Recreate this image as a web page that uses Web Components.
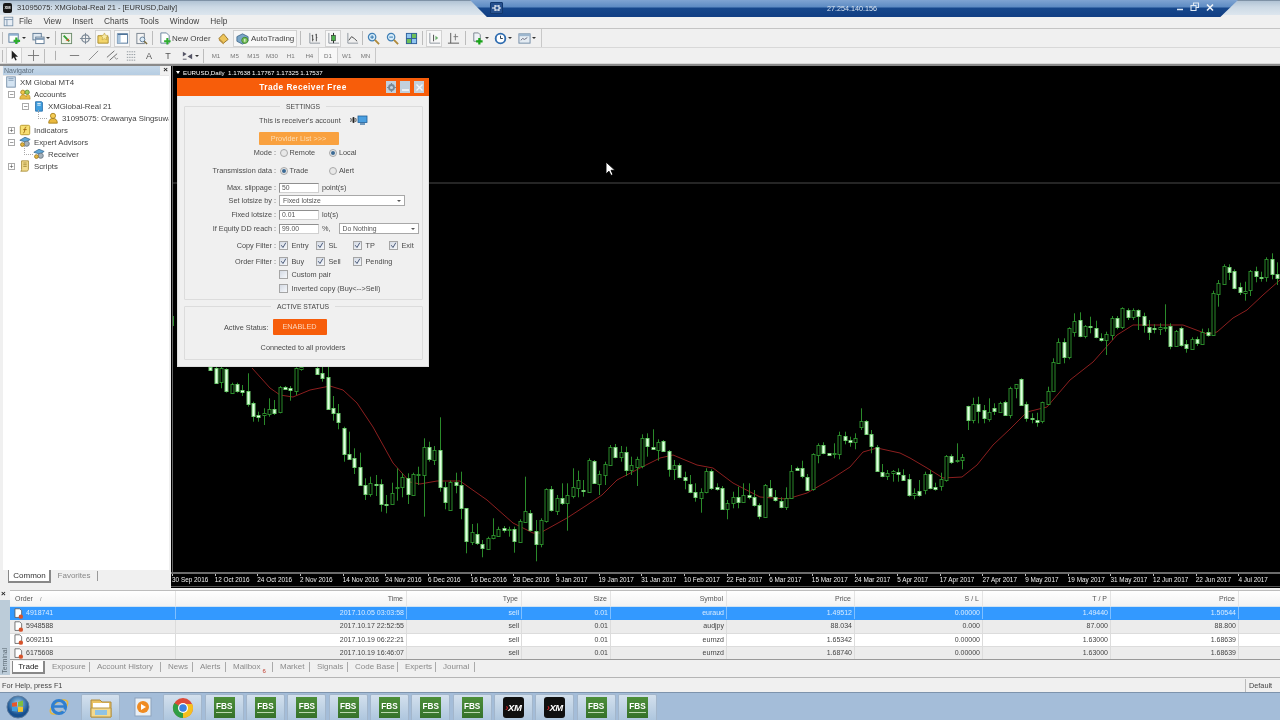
<!DOCTYPE html>
<html><head><meta charset="utf-8"><title>MT4</title>
<style>html,body{margin:0;padding:0;background:#f0f0f0;overflow:hidden}</style></head>
<body>
<mt-app></mt-app>
<script>
const def=(name,css,render)=>customElements.define(name,class extends HTMLElement{
  constructor(){super();this.attachShadow({mode:'open'})}
  connectedCallback(){this.shadowRoot.innerHTML=`<style>${css}</style>${render(this)}`}
});
const F='"Liberation Sans",sans-serif';
const I={
new:'<rect x="1" y="2" width="10" height="9" fill="#fff" stroke="#56789a"/><rect x="1" y="2" width="10" height="2" fill="#8fb0d0"/><path d="M9 6v7M6 9.500h7" stroke="#2fae2f" stroke-width="2.400"/>',
prof:'<rect x="1" y="1.500" width="9" height="7" fill="#dfe8f0" stroke="#5f7a94"/><rect x="4" y="5.500" width="9" height="7" fill="#fff" stroke="#5f7a94"/><path d="M4 7.500h9" stroke="#7f9ab4" stroke-width="2"/>',
mw:'<rect x="1.500" y="1.500" width="11" height="11" fill="#eef3e8" stroke="#6b8a6b"/><path d="M4 4l6 6" stroke="#2f9e2f" stroke-width="2"/><path d="M10 7l-1 3-3-1z" fill="#d8582a"/>',
data:'<circle cx="7" cy="7" r="4" fill="none" stroke="#7a8794" stroke-width="1.300"/><path d="M7 1v12M1 7h12" stroke="#7a8794"/>',
nav:'<path d="M1 4h5l1 1h5v7H1z" fill="#f3d56a" stroke="#a98a2a"/><path d="M8 1l1.200 2.500 2.800.3-2 1.900.5 2.800L8 7.200 5.500 8.500l.5-2.800-2-1.900 2.800-.3z" fill="#f8e9a0" stroke="#b89a3a" stroke-width=".6"/>',
term:'<rect x="1.500" y="2" width="11" height="10" fill="#fff" stroke="#4f7398"/><rect x="1.500" y="2" width="3.500" height="10" fill="#a9c4dd"/><path d="M2 2.500h10" stroke="#4f7398" stroke-width="1.500"/>',
test:'<rect x="2" y="1.500" width="8" height="11" fill="#f4f4f4" stroke="#78838e"/><circle cx="8" cy="8" r="2.600" fill="#dcecf8" stroke="#5f7a94"/><path d="M10 10l3 3" stroke="#7a6a3a" stroke-width="1.500"/>',
order:'<path d="M2 1h6l3 3v8H2z" fill="#fff" stroke="#68829c"/><path d="M9 6.500v7M5.500 10h7" stroke="#2fae2f" stroke-width="2.200"/>',
ed:'<path d="M2 7l5-5 5 6-5 4z" fill="#eec55a" stroke="#96742a"/><path d="M2 7l5 5v1.500L2 9z" fill="#b78a34"/>',
auto:'<path d="M1 5l6-3 6 3v5l-6 3-6-3z" fill="#7aa5c8" stroke="#4a7092"/><circle cx="9.500" cy="9" r="3.300" fill="#7cc05c" stroke="#3f8a2f"/><path d="M9.500 7.500v3" stroke="#fff"/>',
bar:'<path d="M2 1v11h11" fill="none" stroke="#8a939c"/><path d="M5 3v7M4 4h1M5 8h1M9 2v8M8 3h1M9 6h1" stroke="#444" fill="none"/>',
cndl:'<path d="M2 1v11h11" fill="none" stroke="#8a939c"/><path d="M7 1v11" stroke="#222"/><rect x="5" y="3.500" width="4" height="6" fill="#4bb24b" stroke="#222" stroke-width=".6"/>',
line:'<path d="M2 1v11h11" fill="none" stroke="#8a939c"/><path d="M3 9l3-4 3 2 3 3" fill="none" stroke="#444"/>',
zin:'<circle cx="5.500" cy="5.500" r="4" fill="#d6ecfa" stroke="#3f7fb5" stroke-width="1.300"/><path d="M3.500 5.500h4M5.500 3.500v4" stroke="#2a6ea8"/><path d="M8.500 8.500l4.500 4.500" stroke="#b08a3a" stroke-width="2"/>',
zout:'<circle cx="5.500" cy="5.500" r="4" fill="#d6ecfa" stroke="#3f7fb5" stroke-width="1.300"/><path d="M3.500 5.500h4" stroke="#2a6ea8"/><path d="M8.500 8.500l4.500 4.500" stroke="#b08a3a" stroke-width="2"/>',
tile:'<rect x="1" y="1" width="12" height="12" fill="#2f5f9a"/><rect x="2" y="2" width="4.500" height="4.500" fill="#8fc4f0"/><rect x="7.500" y="2" width="4.500" height="4.500" fill="#6ec05a"/><rect x="2" y="7.500" width="4.500" height="4.500" fill="#6ec05a"/><rect x="7.500" y="7.500" width="4.500" height="4.500" fill="#8fc4f0"/>',
scr:'<path d="M2 1v11h11" fill="none" stroke="#8a939c"/><path d="M6 3v7" stroke="#444"/><path d="M8 4l3 2.500L8 9z" fill="#6ab06a"/>',
shf:'<path d="M4 1v11M1 12h12" fill="none" stroke="#555"/><path d="M9 2v7M7 5h5" stroke="#777"/>',
ind:'<path d="M3 1h5l2 2v7H3z" fill="#eef2f6" stroke="#78838e"/><path d="M9 6.500v7M5.500 10h7" stroke="#19a319" stroke-width="2.400"/>',
clk:'<circle cx="7" cy="7" r="5.200" fill="#fff" stroke="#2e6cb0" stroke-width="2"/><path d="M7 4v3h2.500" fill="none" stroke="#234"/>',
tpl:'<rect x="1" y="2" width="12" height="10" fill="#e4ecf3" stroke="#708aa4"/><rect x="1" y="2" width="12" height="2.500" fill="#9cb6ce"/><path d="M3 9l2-2 2 1 3-2" fill="none" stroke="#667"/>',
arr:'<path d="M4 1.500v9.500l2.300-2 1.600 3.500 1.500-.7-1.600-3.400h3z" fill="#222"/>',
cross:'<path d="M7 1v12M1 7h12" stroke="#777"/>',
vl:'<path d="M7 2v10" stroke="#aaa"/>',hl:'<path d="M2 7h10" stroke="#777"/>',
tl:'<path d="M2 12L12 2" stroke="#888"/>',
chan:'<path d="M1 9l8-7M4 12l8-7" stroke="#666"/><path d="M9 8l2 3 2-1" fill="none" stroke="#999"/>',
fib:'<path d="M2 3h10M2 6h10M2 9h10M2 12h10" stroke="#8d949b" stroke-dasharray="1.500 1"/>',
shp:'<path d="M2 3l4 2.500-4 2.500zM7 8l5-3v6z" fill="#556"/><path d="M2 11h4" stroke="#556"/>',
mb:'<rect x="1.500" y="1.500" width="11" height="11" fill="#e8eef5" stroke="#6f8aa4"/><path d="M1.500 4.500h11M5 4.500v8" stroke="#6f8aa4"/>',
sv:'<rect x="2" y="1" width="10" height="12" fill="#d4e4f2" stroke="#6f8aa4"/><path d="M4 3h6M4 5h6" stroke="#7f9ab4"/>',
acc:'<circle cx="4.500" cy="5" r="2.500" fill="#f2c84a" stroke="#a57e1a"/><circle cx="9.500" cy="5" r="2.500" fill="#9fce5a" stroke="#5f8a2a"/><path d="M1 13c0-4 2-5 4-5s3 1 3.500 2.500c0-2 1-3 1.500-3 2 0 3 1.500 3 5.500z" fill="#e9bb45" stroke="#a57e1a" stroke-width=".6"/>',
srv:'<path d="M3 2h7l1 1v10H3z" fill="#3f9fe0" stroke="#2a6ea8"/><path d="M5 4h4M5 6h4" stroke="#fff"/>',
usr:'<circle cx="7" cy="4.500" r="3" fill="#f5cc55" stroke="#a57e1a"/><path d="M2 13c0-4 2-5.500 5-5.500s5 1.500 5 5.500z" fill="#eab93e" stroke="#a57e1a"/>',
indi:'<rect x="1.500" y="1.500" width="11" height="11" rx="1.500" fill="#f7df73" stroke="#b4921f"/><path d="M8.500 3.500C7 3.500 7 5 6.700 7S6.300 10.500 5 10.500M5 6.500h4" fill="none" stroke="#a06a10" stroke-width="1.100"/>',
ea:'<path d="M1 5l6-3.500L13 4l-5 3z" fill="#5fa8d8" stroke="#3f7298"/><circle cx="9" cy="9" r="3" fill="#a4b0ba" stroke="#6a7680"/><circle cx="4" cy="10" r="2.200" fill="#e4b640" stroke="#9a7a20"/>',
scp:'<path d="M3 1h8v10c0 1-1 2-2 2H2c1 0 1-1 1-2z" fill="#f2dc8e" stroke="#a58a35"/><path d="M5 3.500h4M5 5.500h4M5 7.500h4" stroke="#a58a35"/>',
doc:'<path d="M2.500 1h6l2.500 2.500V12H2.500z" fill="#fff" stroke="#555"/><circle cx="10" cy="11" r="2.800" fill="#d6522a"/>'
};
def('ui-icon',':host{display:inline-flex;flex:none}svg{display:block}',t=>{const s=+(t.getAttribute('size')||13);return `<svg width="${s}" height="${s}" viewBox="0 0 14 14">${I[t.getAttribute('name')]||''}</svg>`});

def('mt-title',`:host{display:flex;align-items:center;height:15px;margin-bottom:-1px;background:linear-gradient(#64788e 0,#b4c5d6 1.500px,#ccd9e5 7px,#dde6ee 100%);font:7.500px ${F};color:#333;position:relative;z-index:2}
.x{width:9px;height:10px;margin:0 5px 0 3px;background:#161616;border-radius:2px;color:#fff;font:bold 4px/10px ${F};text-align:center;flex:none}
.rdp{position:absolute;left:470px;top:0;width:768px;height:17px;clip-path:polygon(0 0,100% 0,97.700% 100%,2.200% 100%);background:linear-gradient(#7fa4d2 0,#5d8bc3 7px,#17488c 8px,#123f84 16px);color:#dbe6f2;font:7.200px ${F}}
.ip{position:absolute;left:357px;top:4px}
.pin{position:absolute;left:20px;top:2px;width:13px;height:12px;background:#26508e;border:1px solid #12386e;box-sizing:border-box;border-radius:1px}
.ctl{position:absolute;top:2px;right:23px;display:flex;gap:5px;align-items:center}
svg{display:block}`,()=>`<span class="x">XM</span><span><slot></slot></span>
<div class="rdp"><div class="pin"><svg width="11" height="10" viewBox="0 0 11 10"><path d="M1 5h3M4 2v6M4 3h4M4 7h4M8 2v6M8 5h2" stroke="#fff" fill="none"/></svg></div><span class="ip">27.254.140.156</span>
<div class="ctl"><svg width="10" height="11" viewBox="0 0 10 11"><path d="M2 7.500h6" stroke="#dfe9f4" stroke-width="1.500"/></svg><svg width="10" height="11" viewBox="0 0 10 11"><path d="M3.500 3V1h5v4.500H6.500M1 3.500h5v5H1z" stroke="#dfe9f4" fill="none" stroke-width="1.100"/></svg><svg width="10" height="11" viewBox="0 0 10 11"><path d="M2 2.500l6 6M8 2.500l-6 6" stroke="#eef3f9" stroke-width="1.600"/></svg></div></div>`);

def('mt-menu',`:host{display:flex;align-items:center;height:14px;background:#f0f0f0;border-bottom:1px solid #c4c4c4;font:8.300px ${F};color:#444;padding-left:3px}
span{margin-right:11px}ui-icon{margin-right:5px}`,t=>`<ui-icon name="mb" size="11"></ui-icon>`+t.getAttribute('items').split(',').map(s=>`<span>${s}</span>`).join(''));

def('mt-toolbar',`:host{display:block;background:#f0f0f0;border-bottom:1px solid #d8d8d8;font:8px ${F};color:#444}
.r{display:flex;align-items:center;height:var(--h,17px);width:max-content;border-right:1px solid #c8c8c8}
.i{display:flex;width:14px;height:15px;align-items:center;justify-content:center;flex:none}
.h{background:#f8f8f8;outline:1px solid #d2d2d2}
.c{width:6px;flex:none;display:flex;justify-content:center}.c:before{content:"";border:2px solid transparent;border-top:2.500px solid #333;border-bottom:0}
.p{flex:none;display:flex;justify-content:center;height:14px}.p:before{content:"";width:1px;background:#bcbcbc}
.g{width:7px;flex:none;height:12px;background:linear-gradient(90deg,transparent 2px,#bbb 2px,#bbb 3px,transparent 3px)}
.f{flex:none;width:18.700px;text-align:center;color:#777;font-size:6.200px;height:15px;line-height:15px}
.l{flex:none;white-space:nowrap;width:40px}.b{display:flex;align-items:center;flex:none;height:15px;box-sizing:border-box;background:#f7f7f7;outline:1px solid #d2d2d2;width:62px;padding-left:2px;gap:2px}
.z{flex:none;width:14px;text-align:center;color:#555;font-size:9px}`,t=>'<div class="r">'+t.getAttribute('spec').split(' ').map(x=>{const [k,v,w]=x.split(':');
 if(k=='i')return `<div class="i"><ui-icon name="${v}" size="13"></ui-icon></div>`;
 if(k=='h')return `<div class="i h"><ui-icon name="${v}" size="13"></ui-icon></div>`;
 if(k=='c')return '<div class="c"></div>';
 if(k=='s')return `<div style="width:${v}px;flex:none"></div>`;
 if(k=='p')return `<div class="p" style="width:${v}px"></div>`;
 if(k=='g')return '<div class="g"></div>';
 if(k=='f')return `<div class="f${w?' h':''}">${v}</div>`;
 if(k=='o')return `<div class="l">New Order</div>`;
 if(k=='a')return `<div class="b"><ui-icon name="auto" size="13"></ui-icon><span>AutoTrading</span></div>`;
 if(k=='z')return `<div class="z">${v}</div>`;
 return ''}).join('')+'</div>');

def('tree-item',`:host{display:flex;align-items:center;height:12px;white-space:nowrap;position:relative;padding-left:calc(var(--l)*1px)}
ui-icon{margin-right:3px}
.e{position:absolute;width:7px;height:7px;box-sizing:border-box;border:1px solid #aaa;background:#fff;top:2.500px;font:7px/5px ${F};color:#444;text-align:center}
.d{position:absolute;border-left:1px dotted #aaa;border-bottom:1px dotted #aaa;width:8px;height:8px;top:-2px}`,t=>{const l=+t.getAttribute('l'),e=t.getAttribute('e');
 return `<style>:host{--l:${l}}</style>`+(e?`<span class="e" style="left:${l-11}px">${e}</span>`:`${t.hasAttribute('dot')?`<span class="d" style="left:${l-9}px"></span>`:''}`)+`<ui-icon name="${t.getAttribute('i')}" size="12"></ui-icon><slot></slot>`});

def('nav-panel',`:host{display:flex;flex-direction:column;width:171px;flex:none;background:#f0f0f0;font:7.800px ${F};color:#444}
.h{height:9px;display:flex;align-items:center;justify-content:space-between;margin:0 3px 0 3px;color:#5d6d7c;font-size:7px;position:relative}
.h b{position:absolute;left:0;top:0;right:8px;height:9px;background:linear-gradient(#c6d8e9,#b6cde2)}
.h span{position:relative;padding-left:1px}.h i{font:bold 8px ${F};color:#222;position:absolute;right:0;top:-1px}
.t{flex:1;background:#fff;margin:0 2px 0 3px;overflow:hidden;position:relative;border-top:1px solid #e6e6e6}
.b{height:18px;display:flex;align-items:flex-start;padding-left:8px;color:#888;font-size:8px}
.tab{height:13px;line-height:11px;box-sizing:border-box}
.a{width:43px;background:#fff;border:1px solid #888;border-top:0;color:#333;text-align:center;box-shadow:inset -1px -1px 0 #888}
.n{width:47px;height:10px;margin-top:1px;line-height:10px;text-align:center;border-right:1px solid #999;color:#888}`,()=>`<div class="h"><b></b><span>Navigator</span><i>×</i></div>
<div class="t"><slot></slot></div><div class="b"><div class="tab a">Common</div><div class="tab n">Favorites</div></div>`);

def('mt-chart',`:host{display:block;flex:1;position:relative;background:#000;overflow:hidden;min-width:0}
svg{display:block}
.hd{position:absolute;left:5px;top:3px;color:#fff;font:6.200px ${F};white-space:nowrap;display:flex;align-items:center;gap:2px}
.hd i{border:2px solid transparent;border-top:3px solid #fff;border-bottom:0;margin:0 1px 0 0;display:block}
.ax{display:flex;height:15px;box-sizing:border-box;border-top:2px solid #6c6c6c;border-bottom:1px solid #555;color:#eee;font:6.400px/10px ${F};padding-left:1px;overflow:hidden}
.ax span{flex:none;width:42.670px;white-space:nowrap;position:relative;padding-top:1px;box-sizing:border-box}
.ax span:before{content:"";position:absolute;left:0;top:0;height:2px;width:1px;background:#bbb}
.wrap{position:relative}
.dlg{position:absolute;left:6px;top:12px}
.cur{position:absolute;left:434px;top:95px}`,t=>{
 const seg=[
 [170+121/3,360,`20 30 20 30 F;24 68 20 70 F;25 68 20 85 H;28 95 25 98 F;72 98 68 102 H;72 92 68 98 F;90 95 75 108 F;92 130 40 140 F;128 167 125 185 F;165 170 155 185 F;160 165 145 195 H;147 163 115 170 H;147 158 120 165 F;82 158 78 160 H;80 87 78 90 F;85 90 78 122 F;25 95 22 105 H;20 26 20 32 H;-;-;25 42 20 45 F;40 55 20 65 F;50 145 20 148 F;145 160 108 182 F;160 188 132 208 F;205 282 200 305 F;282 298 215 300 F;295 322 265 342 F;322 375 278 378 F;375 402 355 420 F;370 402 350 410 H;372 374 345 408 F;372 432 358 455 F;432 434 405 460 F;400 432 368 435 H;382 385 325 422 H;352 382 340 412 H;355 403 340 432 F;342 405 338 408 H;343 345 320 375 H;260 343 235 470 H;262 298 245 305 F;270 300 258 315 H;270 380 172 395 F;380 425 365 448 F;367 450 362 452 H;367 375 338 400 F;375 445 335 478 F;445 545 445 580 F;515 545 492 555 H;522 550 490 555 F;553 565 540 592 F;535 568 530 570 H;525 535 475 538 H;508 528 500 530 H;503 510 498 518 F;508 510 500 530 H;508 543 500 578 F;482 545 478 548 H;452 485 350 487 H;460 510 450 515 F;512 550 480 604 F`],
 [540+2/3,400,`360 432 355 442 H;268 365 265 368 H;268 330 258 335 F;294 332 285 345 H;295 310 250 315 F;286 310 250 392 H;262 288 205 295 H;240 263 212 292 H;270 272 240 290 F;180 275 175 278 H;182 248 180 252 F;222 252 212 285 H;192 224 185 255 H;140 195 135 198 H;140 170 132 175 F;155 170 138 185 H;155 210 140 228 F;195 210 170 225 H;177 200 170 258 H;115 200 103 205 H;115 138 100 170 F;140 147 88 150 F;125 148 118 182 H;122 153 120 155 F;153 207 150 230 F;195 207 180 240 H;195 230 190 235 F;230 240 215 268 F;252 275 225 280 F;277 293 250 305 F;275 293 265 338 H;212 275 205 280 H;214 266 208 270 F;262 268 250 272 F;263 325 258 328 F;308 325 300 358 H;290 307 275 325 H;290 305 260 325 F;284 305 250 308 H;286 292 250 298 F;292 316 270 320 F;316 348 310 358 F;254 350 252 352 H;265 288 240 292 F;292 300 270 305 F;302 320 292 325 F;294 320 262 330 H;212 292 195 295 H;205 210 200 212 F;205 230 182 235 F;230 268 222 270 F;163 268 160 272 H;135 165 130 190 H;135 160 127 163 F;160 165 160 167 F;160 163 130 175 H;105 163 95 178 H;108 120 95 133 F;120 126 110 140 F;115 128 100 148 H;62 80 25 90 H;62 102 60 105 F;103 140 90 160 F;140 213 135 215 F;216 228 192 232 F;218 226 210 240 H;213 218 210 245 H;215 220 205 245 F;224 238 208 240 F;238 285 222 290 F;278 283 265 298 H;272 285 240 290 F`],
 [910+44/3,360,`342 390 335 403 H;342 385 330 388 F;380 385 368 392 F;358 380 338 392 H;288 360 285 365 H;288 305 283 312 F;300 304 250 308 H;292 302 282 328 H`],
 [900+203/3,230,`527 570 527 600 F;523 570 503 580 H;522 542 500 580 F;540 565 525 580 F;545 567 505 575 H;535 545 520 555 F;518 545 515 548 H;517 556 512 558 F;475 557 470 565 H;463 475 463 505 H;447 525 445 528 F;523 565 515 575 F;565 568 550 580 F;570 575 548 590 F;517 575 515 580 H;482 522 470 525 H;397 485 385 485 H;335 397 325 400 H;335 380 325 400 F;295 382 292 388 H;272 305 250 320 H;270 317 247 322 F;287 317 285 325 H;288 292 260 310 F;293 320 272 325 F;325 331 310 335 F;313 331 305 375 H;265 315 258 330 H;265 292 258 298 F;235 293 232 297 H;240 260 235 270 F;240 260 235 270 H;240 257 238 300 F;257 285 248 308 F;290 304 270 330 F;294 298 283 310 F;292 298 280 315 H;290 293 223 305 H;287 347 280 358 F;304 348 300 350 H;295 345 290 350 F;343 355 330 368 F;326 355 322 360 H;327 340 320 348 F;306 342 296 345 H;307 315 295 320 F;190 317 182 318 H;158 190 150 230 H;107 160 103 162 H;110 124 103 150 F;122 172 118 178 F;172 187 158 195 F;182 187 155 212 H;122 180 120 198 H;124 140 110 157 F;140 143 125 155 F;87 142 82 155 H;87 132 70 148 F;132 143 97 165 F`]];
 let w='',b='';
 for(const [x0,y0,s] of seg){s.split(';').forEach((c,i)=>{if(c=='-')return;const [tp,bt,hi,lo,k]=c.split(' ');
  const x=Math.round(x0+i*16/3)+.5,Y=v=>y0+v/3;
  w+=`M${x} ${Y(+hi).toFixed(1)}V${Y(+lo).toFixed(1)}`;
  const ty=Math.round(Y(+tp))+.5,h=Math.max(1,Math.round(Y(+bt)-Y(+tp)));
  b+=`<rect x="${x-1.5}" y="${ty}" width="3" height="${h}" fill="${k=='F'?'#e2ffe2':'#000'}" stroke="${k=='F'?'#6fd06f':'#2a8a2a'}"/>`;
 })}
 const ma='252,368 270,388 280,395 293,397 310,390 330,386 343,390 357,403 373,427 393,463 410,482 420,484 437,481 460,481 487,500 513,523 533,533 540,533 567,518 587,505 602,495 617,480 640,468 660,458 673,455 697,465 713,468 733,483 760,497 787,499 807,493 833,478 850,467 863,452 877,448 900,453 910,458 927,468 943,478 962,477 977,465 993,445 1010,429 1027,412 1047,407 1070,380 1093,362 1117,335 1133,325 1167,325 1183,325 1207,334 1217,332 1233,318 1247,310 1263,295 1280,280';
 const labs='30 Sep 2016,12 Oct 2016,24 Oct 2016,2 Nov 2016,14 Nov 2016,24 Nov 2016,6 Dec 2016,16 Dec 2016,28 Dec 2016,9 Jan 2017,19 Jan 2017,31 Jan 2017,10 Feb 2017,22 Feb 2017,6 Mar 2017,15 Mar 2017,24 Mar 2017,5 Apr 2017,17 Apr 2017,27 Apr 2017,9 May 2017,19 May 2017,31 May 2017,12 Jun 2017,22 Jun 2017,4 Jul 2017'.split(',');
 return `<div class="wrap"><svg width="1109" height="506" viewBox="171 66 1109 506">
 <path d="M172.500 66V572" stroke="#666"/>
 <path d="M173 183H1280" stroke="#4a4a4a"/>
 <path d="M173.500 316V326" stroke="#2a8a2a"/>
 <polyline points="${ma}" fill="none" stroke="#8c1f1f" stroke-width="1"/>
 <path d="${w}" stroke="#2a8a2a" fill="none"/>${b}</svg>
 <div class="hd"><i></i><span>EURUSD,Daily&nbsp; 1.17638 1.17767 1.17325 1.17537</span></div>
 <div class="dlg"><receiver-dialog></receiver-dialog></div>
 <svg class="cur" width="11" height="16" viewBox="0 0 11 16"><path d="M1 1v12l3-2.800 2 4.300 2-1-2-4.200h4z" fill="#fff" stroke="#000" stroke-width=".9"/></svg></div>
 <div class="ax">${labs.map(l=>`<span>${l}</span>`).join('')}</div>`});

def('ds-group',`:host{display:block;margin:0 5.500px}
fieldset{margin:0;padding:var(--p,2.500px 0 4.500px);border:1px solid #dcdcdc;border-radius:1px;height:var(--fh);box-sizing:border-box;min-width:0}
legend{margin:0 auto;padding:0 6px;font:6.800px/9px ${F};color:#444}`,t=>`<fieldset><legend>${t.getAttribute('legend')}</legend><slot></slot></fieldset>`);

def('form-row',`:host{display:grid;grid-template-columns:91.500px 1fr;column-gap:3px;align-items:center;height:13px;font:7.300px ${F};color:#4a4a4a;margin-top:var(--m,0)}
.l{text-align:right;white-space:nowrap}.c{display:flex;align-items:center;white-space:nowrap;min-width:0}`,t=>`<div class="l">${t.getAttribute('label')||''}</div><div class="c"><slot></slot></div>`);

def('ds-check',`:host{display:inline-flex;align-items:center;gap:3.500px;width:var(--w,37px);flex:none}
.b{width:9px;height:9px;box-sizing:border-box;border:1px solid #a5a5a5;background:linear-gradient(135deg,#d4dae4,#f6f8fb);flex:none;display:block}
svg{display:block}`,t=>`<span class="b">${t.hasAttribute('on')?'<svg width="7" height="7" viewBox="0 0 7 7"><path d="M1.200 3.200l1.800 2.300 2.800-4.800" stroke="#4a5a7a" fill="none"/></svg>':''}</span><slot></slot>`);

def('ds-radio',`:host{display:inline-flex;align-items:center;gap:2px;width:49px;flex:none;margin-left:.5px}
.r{width:8px;height:8px;box-sizing:border-box;border-radius:50%;border:1px solid #a9a9a9;background:#e8e8e8;display:flex;align-items:center;justify-content:center}
.r i{width:4px;height:4px;border-radius:50%;background:#3b6a94;display:block}`,t=>`<span class="r">${t.hasAttribute('on')?'<i></i>':''}</span><slot></slot>`);

def('ds-input',`:host{display:inline-block;width:40px;height:10px;box-sizing:border-box;border:1px solid #8f8f8f;border-right-color:#d0d0d0;border-bottom-color:#d0d0d0;background:#fff;font:6.800px/8px ${F};padding-left:2px;color:#555;flex:none;margin-right:3px}`,()=>`<slot></slot>`);

def('ds-select',`:host{display:inline-flex;align-items:center;justify-content:space-between;height:11px;box-sizing:border-box;border:1px solid #a8a8a8;background:#fff;font:6.800px ${F};color:#555;padding:0 3px;flex:none}
i{border:2px solid transparent;border-top:2.500px solid #555;border-bottom:0;display:block}`,()=>`<slot></slot><i></i>`);

def('receiver-dialog',`:host{display:flex;flex-direction:column;width:252px;height:289px;background:#f0f0f0;box-sizing:border-box;border:1px solid #dedede;border-top:0}
.hd{height:18px;background:#f75d0a;display:flex;align-items:center;position:relative;flex:none;margin:0 -1px}
.hd b{flex:1;text-align:center;color:#fff;font:bold 8.300px ${F};letter-spacing:.45px}
.btns{position:absolute;right:5px;top:3px;display:flex;gap:4px}
.btns span{width:10px;height:12px;background:#c2d0dc;display:flex;align-items:center;justify-content:center}
svg{display:block}
.p{height:14px;display:flex;align-items:center;font:7.300px ${F};color:#4a4a4a;white-space:nowrap;margin-left:74.500px}
.pb{width:80px;height:13px;background:#f9a13f;color:#fcdcb4;font:7.300px/13px ${F};text-align:center;margin:5px 0 1px 74px;border-radius:1px}
.s{height:16px;display:flex;align-items:center;margin-top:8px;font:7.300px ${F};color:#4a4a4a}
.sl{width:84px;text-align:right;margin-right:4px}
.en{width:54px;height:16px;background:#f75d0a;color:#fbd6bd;font:7.300px/16px ${F};text-align:center;border-radius:1px}
.cn{text-align:center;font:7.300px ${F};color:#4a4a4a;margin-top:8px}
.g1{margin-top:5.500px}.g2{margin-top:2.500px}`,()=>`<div class="hd"><b>Trade Receiver Free</b><div class="btns">
<span><svg width="9" height="9" viewBox="0 0 9 9"><circle cx="4.500" cy="4.500" r="2.500" fill="none" stroke="#7a8894" stroke-width="1.800"/><path d="M4.500 0v2M4.500 7v2M0 4.500h2M7 4.500h2" stroke="#7a8894" stroke-width="1.200"/></svg></span>
<span><svg width="9" height="9" viewBox="0 0 9 9"><path d="M1 7h7" stroke="#f5f7f9" stroke-width="1.600"/></svg></span>
<span><svg width="9" height="9" viewBox="0 0 9 9"><path d="M1.500 1.500l6 6M7.500 1.500l-6 6" stroke="#f5f7f9" stroke-width="1.400"/></svg></span></div></div>
<ds-group class="g1" legend="SETTINGS" style="--fh:198px">
<div class="p">This is receiver's account<svg style="margin-left:8px" width="19" height="10" viewBox="0 0 19 10"><path d="M1.500 3c1 1.200 1 2.800 0 4M.5 2" fill="none" stroke="#222" stroke-width=".8"/><rect x="3.500" y="2" width="2" height="6" rx="1" fill="#222"/><path d="M6.500 3c.8 1.200.8 2.800 0 4" fill="none" stroke="#222" stroke-width=".8"/><rect x="9" y="1" width="9" height="6.500" fill="#4a9fe0" stroke="#1f5f98" stroke-width=".8"/><path d="M11 9h5" stroke="#1f5f98" stroke-width="1.200"/></svg></div>
<div class="pb">Provider List &gt;&gt;&gt;</div>
<form-row label="Mode :"><ds-radio>Remote</ds-radio><ds-radio on>Local</ds-radio></form-row>
<form-row label="Transmission data :" style="--m:5px"><ds-radio on>Trade</ds-radio><ds-radio>Alert</ds-radio></form-row>
<form-row label="Max. slippage :" style="--m:4px"><ds-input>50</ds-input>point(s)</form-row>
<form-row label="Set lotsize by :"><ds-select style="width:126px">Fixed lotsize</ds-select></form-row>
<form-row label="Fixed lotsize :" style="--m:1px"><ds-input>0.01</ds-input>lot(s)</form-row>
<form-row label="If Equity DD reach :" style="--m:1px"><ds-input>99.00</ds-input>%,<ds-select style="width:80px;margin-left:8px">Do Nothing</ds-select></form-row>
<form-row label="Copy Filter :" style="--m:4px"><ds-check on>Entry</ds-check><ds-check on>SL</ds-check><ds-check on style="--w:36px">TP</ds-check><ds-check on>Exit</ds-check></form-row>
<form-row label="Order Filter :" style="--m:3px"><ds-check on>Buy</ds-check><ds-check on>Sell</ds-check><ds-check on style="--w:60px">Pending</ds-check></form-row>
<form-row><ds-check style="--w:80px">Custom pair</ds-check></form-row>
<form-row style="--m:1px"><ds-check style="--w:120px">Inverted copy (Buy&lt;--&gt;Sell)</ds-check></form-row>
</ds-group>
<ds-group class="g2" legend="ACTIVE STATUS" style="--fh:57.500px;--p:0">
<div class="s"><span class="sl">Active Status:</span><div class="en">ENABLED</div></div>
<div class="cn">Connected to all providers</div>
</ds-group>`);

const COLS='166px 231px 115px 89px 116px 128px 128px 128px 128px 1fr';
def('tbl-row',`:host{display:grid;grid-template-columns:${COLS};height:13.300px;font:7px/12.300px ${F};color:var(--c,#444);background:var(--bg,#fff);box-sizing:border-box;border-bottom:1px solid #dcdcdc}
div{text-align:right;padding-right:2px;border-right:1px solid var(--d,#dcdcdc);box-sizing:border-box;white-space:nowrap;overflow:hidden}
div:first-of-type{text-align:left;display:flex;align-items:center;padding-left:3px;gap:2px}div:last-child{border:0}`,t=>{const v=t.getAttribute('v').split('|');return v.map((x,i)=>`<div>${i==0?'<ui-icon name="doc" size="11"></ui-icon>':''}${x}</div>`).join('')+'<div></div>'});

def('tbl-head',`:host{display:grid;grid-template-columns:${COLS};height:16px;font:7px/15px ${F};color:#555;background:linear-gradient(#fff,#f3f3f3);border-bottom:1px solid #cfe3f3;box-sizing:border-box}
div{text-align:right;padding-right:3px;border-right:1px solid #e4e4e4;box-sizing:border-box;white-space:nowrap}
div:first-of-type{text-align:left;padding-left:5px}div:last-child{border:0}i{font-style:normal;font-size:5.500px;margin-left:7px;color:#777}`,t=>t.getAttribute('v').split('|').map((x,i)=>`<div>${x}${i==0?'<i>/</i>':''}</div>`).join('')+'<div></div>');

def('tab-bar',`:host{display:flex;height:14px;align-items:center;font:8px ${F};color:#8a8a8a;padding-left:2px}
.a{width:33px;height:13px;box-sizing:border-box;background:#fff;border:1px solid #888;border-top:0;box-shadow:inset -1px -1px 0 #888;color:#222;text-align:center;line-height:11px;flex:none}
.t{box-sizing:border-box;flex:none;border-right:1px solid #aaa;height:10px;line-height:10px;padding-left:7px;white-space:nowrap;position:relative}
sub{color:#c0392b;font-size:6px;position:absolute;vertical-align:baseline;margin-left:2px;top:4px}`,t=>{
 const d=[['Exposure',45],['Account History',71],['News',32],['Alerts',33],['Mailbox',47],['Market',37],['Signals',38],['Code Base',50],['Experts',38],['Journal',39]];
 return `<div class="a">Trade</div>`+d.map(([n,w])=>`<div class="t" style="width:${w}px">${n}${n=='Mailbox'?'<sub>6</sub>':''}</div>`).join('')});

def('mt-terminal',`:host{display:flex;height:85px;flex:none;background:#f0f0f0;font:7px ${F}}
.s{width:10px;flex:none;position:relative;background:linear-gradient(#f0f0f0 10px,#bcccd9 10px)}
.s i{position:absolute;left:1px;top:-1px;font:bold 8px ${F};font-style:normal;color:#222}
.s span{position:absolute;bottom:1px;left:0;writing-mode:vertical-rl;transform:rotate(180deg);font:6.800px/10px ${F};color:#5c6a74}
.m{flex:1;min-width:0;border-top:1px solid #bdbdbd}`,()=>`<div class="s"><i>×</i><span>Terminal</span></div><div class="m"><slot></slot></div>`);

def('status-bar',`:host{display:flex;justify-content:space-between;align-items:center;height:16px;box-sizing:border-box;border-top:1px solid #b5b5b5;border-bottom:1px solid #7d93ac;background:#f0f0f0;font:7.300px ${F};color:#444;padding:0 7px 0 2px}
.d{border-left:1px solid #bbb;padding-left:3px;line-height:13px;width:25px;margin-right:-1px}`,t=>`<span>For Help, press F1</span><span class="d">Default</span>`);

def('task-btn',`:host{display:flex;width:39px;height:26px;margin-right:2.340px;align-items:center;justify-content:center;box-sizing:border-box;border:1px solid #a3b6cb;border-bottom:0;border-radius:2px 2px 0 0;background:linear-gradient(#d3e0ed,#aec6de);flex:none}`,()=>`<slot></slot>`);
def('fbs-logo',`:host{display:block;width:21px;height:21px;background:linear-gradient(#4d8f3a,#35712a);color:#fff;font:bold 8.200px/17px "Liberation Sans Narrow","Liberation Sans",sans-serif;text-align:center;box-sizing:border-box;padding-top:1px}
u{text-decoration:none;border-bottom:1px solid #bcd9b0;display:inline-block;line-height:9px;padding-bottom:1px}`,()=>`<u>FBS</u>`);
def('xm-logo',`:host{display:block;width:21px;height:21px;background:#101010;border-radius:3px;color:#fff;font:italic bold 9.500px/21px ${F};text-align:center;letter-spacing:-.4px}
b{color:#d21f26}`,()=>`<b>›</b>XM`);

def('task-bar',`:host{display:flex;align-items:flex-end;height:27px;background:#a4bdd9;flex:none;position:relative}
.o{flex:none;display:flex;justify-content:center;align-items:center;height:26px}
svg{display:block}`,()=>`<div class="o" style="width:36px"><svg width="24" height="24" viewBox="0 0 24 24"><defs><radialGradient id="g" cx=".5" cy=".35"><stop offset="0" stop-color="#9fd0ee"/><stop offset="1" stop-color="#17508f"/></radialGradient></defs><circle cx="12" cy="12" r="11" fill="url(#g)" stroke="#5c7a9c"/><path d="M6 8l5-1v4.500H6z" fill="#e8562b"/><path d="M12 7l5-1.500V11l-5 .5z" fill="#7fbf3f"/><path d="M6 12h5v4.500L6 16z" fill="#3f9fe0"/><path d="M12 12l5-.3v5L12 17z" fill="#f5c52a"/></svg></div>
<div class="o" style="width:45px"><svg width="22" height="22" viewBox="0 0 22 22"><ellipse cx="11" cy="11" rx="10" ry="5" fill="none" stroke="#e5b73b" stroke-width="1.500" transform="rotate(-35 11 11)"/><circle cx="11" cy="11" r="6.500" fill="none" stroke="#2f7fd0" stroke-width="3.200"/><path d="M6 10.500h10" stroke="#2f7fd0" stroke-width="2.500"/><path d="M13 13l4 2" stroke="#a4bdd9" stroke-width="2"/></svg></div>
<task-btn><svg width="24" height="22" viewBox="0 0 24 22"><path d="M2 3h9l2 2h9v15H2z" fill="#e9c264" stroke="#b08a3a"/><rect x="4" y="6" width="16" height="8" fill="#fff"/><path d="M2 11h20v9H2z" fill="#f3d98e" stroke="#b79645"/><rect x="6" y="13" width="12" height="5" fill="#8ec3e6"/></svg></task-btn>
<div class="o" style="width:41px"><svg width="22" height="22" viewBox="0 0 22 22"><rect x="3" y="2" width="16" height="18" fill="#e8eff6" stroke="#8ea4bd"/><circle cx="11" cy="11" r="6" fill="#ef8b22"/><path d="M9 8l5 3-5 3z" fill="#fff"/></svg></div>
<task-btn><svg width="22" height="22" viewBox="0 0 22 22"><circle cx="11" cy="11" r="10" fill="#dd4b39"/><path d="M11 11L2.300 6A10 10 0 0 0 11 21z" fill="#2f9e44"/><path d="M11 11V21A10 10 0 0 0 20.200 7H11z" fill="#f6c01e"/><circle cx="11" cy="11" r="5" fill="#fff"/><circle cx="11" cy="11" r="3.800" fill="#3b82e0"/></svg></task-btn>
${[0,0,0,0,0,0,0].map(()=>'<task-btn><fbs-logo></fbs-logo></task-btn>').join('')}
<task-btn><xm-logo></xm-logo></task-btn><task-btn><xm-logo></xm-logo></task-btn>
<task-btn><fbs-logo></fbs-logo></task-btn><task-btn><fbs-logo></fbs-logo></task-btn>`);

def('mt-app',`:host{display:flex;flex-direction:column;width:1280px;height:720px;overflow:hidden;background:#f0f0f0;filter:blur(.35px)}
.main{display:flex;height:522px;flex:none;border-top:2px solid #8a8a8a;background:#f0f0f0}
.g{height:2px;flex:none}.g2{height:2px;flex:none}
tbl-row.sel{--bg:#3399ff;--c:#d9ecff;--d:#7fbfff;border-bottom-color:#3399ff}
tbl-row.alt{--bg:#ececec}
.end{border-bottom:1px solid #999}`,()=>`<mt-title>31095075: XMGlobal-Real 21 - [EURUSD,Daily]</mt-title>
<mt-menu items="File,View,Insert,Charts,Tools,Window,Help"></mt-menu>
<mt-toolbar style="--h:18px" spec="g i:new c s:4 i:prof c p:8 i:mw s:5 i:data s:4 h:nav s:5 h:term s:5 i:test p:8 s:2 i:order o s:4 i:ed s:4 a p:8 s:3 i:bar s:5 h:cndl s:5 i:line p:7 i:zin s:5 i:zout s:5 i:tile p:9 h:scr s:5 i:shf p:10 i:ind c s:3 i:clk c s:4 i:tpl c s:4"></mt-toolbar>
<mt-toolbar style="--h:15px" spec="g h:arr s:5 i:cross p:8 i:vl s:5 i:hl s:5 i:tl s:5 i:chan s:5 i:fib s:4 z:A s:5 z:T s:5 i:shp c p:6.600 f:M1 f:M5 f:M15 f:M30 f:H1 f:H4 f:D1:1 f:W1 f:MN"></mt-toolbar>
<div class="main"><nav-panel>
<tree-item l="2" i="sv">XM Global MT4</tree-item>
<tree-item l="16" i="acc" e="−">Accounts</tree-item>
<tree-item l="30" i="srv" e="−">XMGlobal-Real 21</tree-item>
<tree-item l="44" i="usr" dot>31095075: Orawanya Singsuwan</tree-item>
<tree-item l="16" i="indi" e="+">Indicators</tree-item>
<tree-item l="16" i="ea" e="−">Expert Advisors</tree-item>
<tree-item l="30" i="ea" dot>Receiver</tree-item>
<tree-item l="16" i="scp" e="+">Scripts</tree-item>
</nav-panel><mt-chart></mt-chart></div>
<div class="g"></div>
<mt-terminal>
<tbl-head v="Order|Time|Type|Size|Symbol|Price|S / L|T / P|Price"></tbl-head>
<tbl-row class="sel" v="4918741|2017.10.05 03:03:58|sell|0.01|euraud|1.49512|0.00000|1.49440|1.50544"></tbl-row>
<tbl-row class="alt" v="5948588|2017.10.17 22:52:55|sell|0.01|audjpy|88.034|0.000|87.000|88.800"></tbl-row>
<tbl-row v="6092151|2017.10.19 06:22:21|sell|0.01|eurnzd|1.65342|0.00000|1.63000|1.68639"></tbl-row>
<tbl-row class="alt end" v="6175608|2017.10.19 16:46:07|sell|0.01|eurnzd|1.68740|0.00000|1.63000|1.68639"></tbl-row>
<tab-bar></tab-bar>
</mt-terminal>
<div class="g2"></div>
<status-bar></status-bar>
<task-bar></task-bar>`);
</script>
</body></html>
